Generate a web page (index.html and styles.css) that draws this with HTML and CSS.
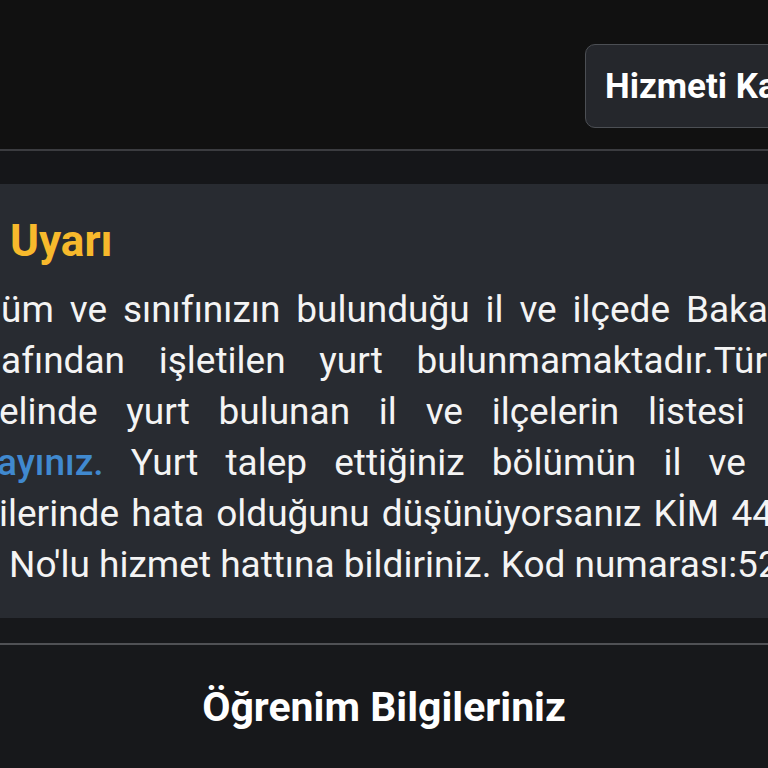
FILE: index.html
```html
<!DOCTYPE html>
<html lang="tr">
<head>
<meta charset="utf-8">
<title>Yurt Başvurusu</title>
<link rel="stylesheet" href="styles.css">
</head>
<body>
<div class="page">
  <header class="top">
    <button class="service-btn">Hizmeti Kapat</button>
  </header>
  <div class="band"></div>
  <section class="alert">
    <h2 class="alert-title">Uyarı</h2>
    <div class="alert-text">
      <div class="ln l1"><span>üm</span><span>ve</span><span>sınıfınızın</span><span>bulunduğu</span><span>il</span><span>ve</span><span>ilçede</span><span>Baka</span></div>
      <div class="ln l2"><span>afından</span><span>işletilen</span><span>yurt</span><span>bulunmamaktadır.Tür</span></div>
      <div class="ln l3"><span>elinde</span><span>yurt</span><span>bulunan</span><span>il</span><span>ve</span><span>ilçelerin</span><span>listesi</span></div>
      <div class="ln l4"><a class="link" href="#">ayınız.</a><span>Yurt</span><span>talep</span><span>ettiğiniz</span><span>bölümün</span><span>il</span><span>ve</span></div>
      <div class="ln l5"><span>ilerinde</span><span>hata</span><span>olduğunu</span><span>düşünüyorsanız</span><span>KİM</span><span>44</span></div>
      <div class="ln l6">No'lu hizmet hattına bildiriniz. Kod numarası:5201</div>
    </div>
  </section>
  <div class="band band-bottom"></div>
  <section class="info">
    <h2 class="info-title">Öğrenim Bilgileriniz</h2>
  </section>
</div>
</body>
</html>
```

FILE: styles.css
```css
* { box-sizing: border-box; }
html, body {
  margin: 0;
  padding: 0;
  background: #111111;
  width: 768px;
  height: 768px;
  overflow: hidden;
}
body {
  font-family: Roboto, "Noto Sans", "Liberation Sans", sans-serif;
  color: #f4f4f4;
}
.page {
  display: flex;
  flex-direction: column;
  height: 768px;
}
.top {
  height: 151px;
  flex-shrink: 0;
  display: flex;
  align-items: flex-start;
  padding: 44px 0 0 585px;
  background: #111111;
  border-bottom: 2px solid #3b3c40;
}
.service-btn {
  flex-shrink: 0;
  height: 84px;
  padding: 0 40px 0 19px;
  background: #25272c;
  border: 1.5px solid #4c4f54;
  border-radius: 10px;
  color: #ffffff;
  font-family: Roboto, "Noto Sans", sans-serif;
  font-weight: 700;
  font-size: 35px;
  white-space: nowrap;
  text-align: left;
}
.band {
  height: 33px;
  flex-shrink: 0;
  background: #151619;
}
.alert {
  flex-shrink: 0;
  height: 434px;
  background: #282b31;
  padding: 32px 0 0 0;
}
.alert-title {
  margin: 0 0 18px 10px;
  font-size: 44px;
  line-height: 50px;
  font-weight: 700;
  color: #f7b92c;
}
.alert-text {
  font-size: 37px;
  line-height: 51px;
}
.ln {
  display: flex;
  justify-content: space-between;
  white-space: nowrap;
  height: 51px;
}
.l1 { margin-left: 1px; width: 767px; }
.l2 { margin-left: 1px; width: 766px; }
.l3 { margin-left: -1px; width: 746px; }
.l4 { margin-left: -3px; width: 749px; }
.l5 { margin-left: -1px; width: 774px; }
.l6 { display: block; padding-left: 9px; }
.link {
  color: #4089cf;
  font-weight: 500;
  text-decoration: none;
}
.band-bottom {
  height: 25px;
  background: #17181b;
  border-bottom: 2px solid #505155;
  box-sizing: content-box;
}
.info {
  flex: 1;
  background: #17181b;
  padding-top: 37px;
  text-align: center;
}
.info-title {
  margin: 0;
  font-size: 41px;
  line-height: 50px;
  font-weight: 700;
  color: #ffffff;
}
```
